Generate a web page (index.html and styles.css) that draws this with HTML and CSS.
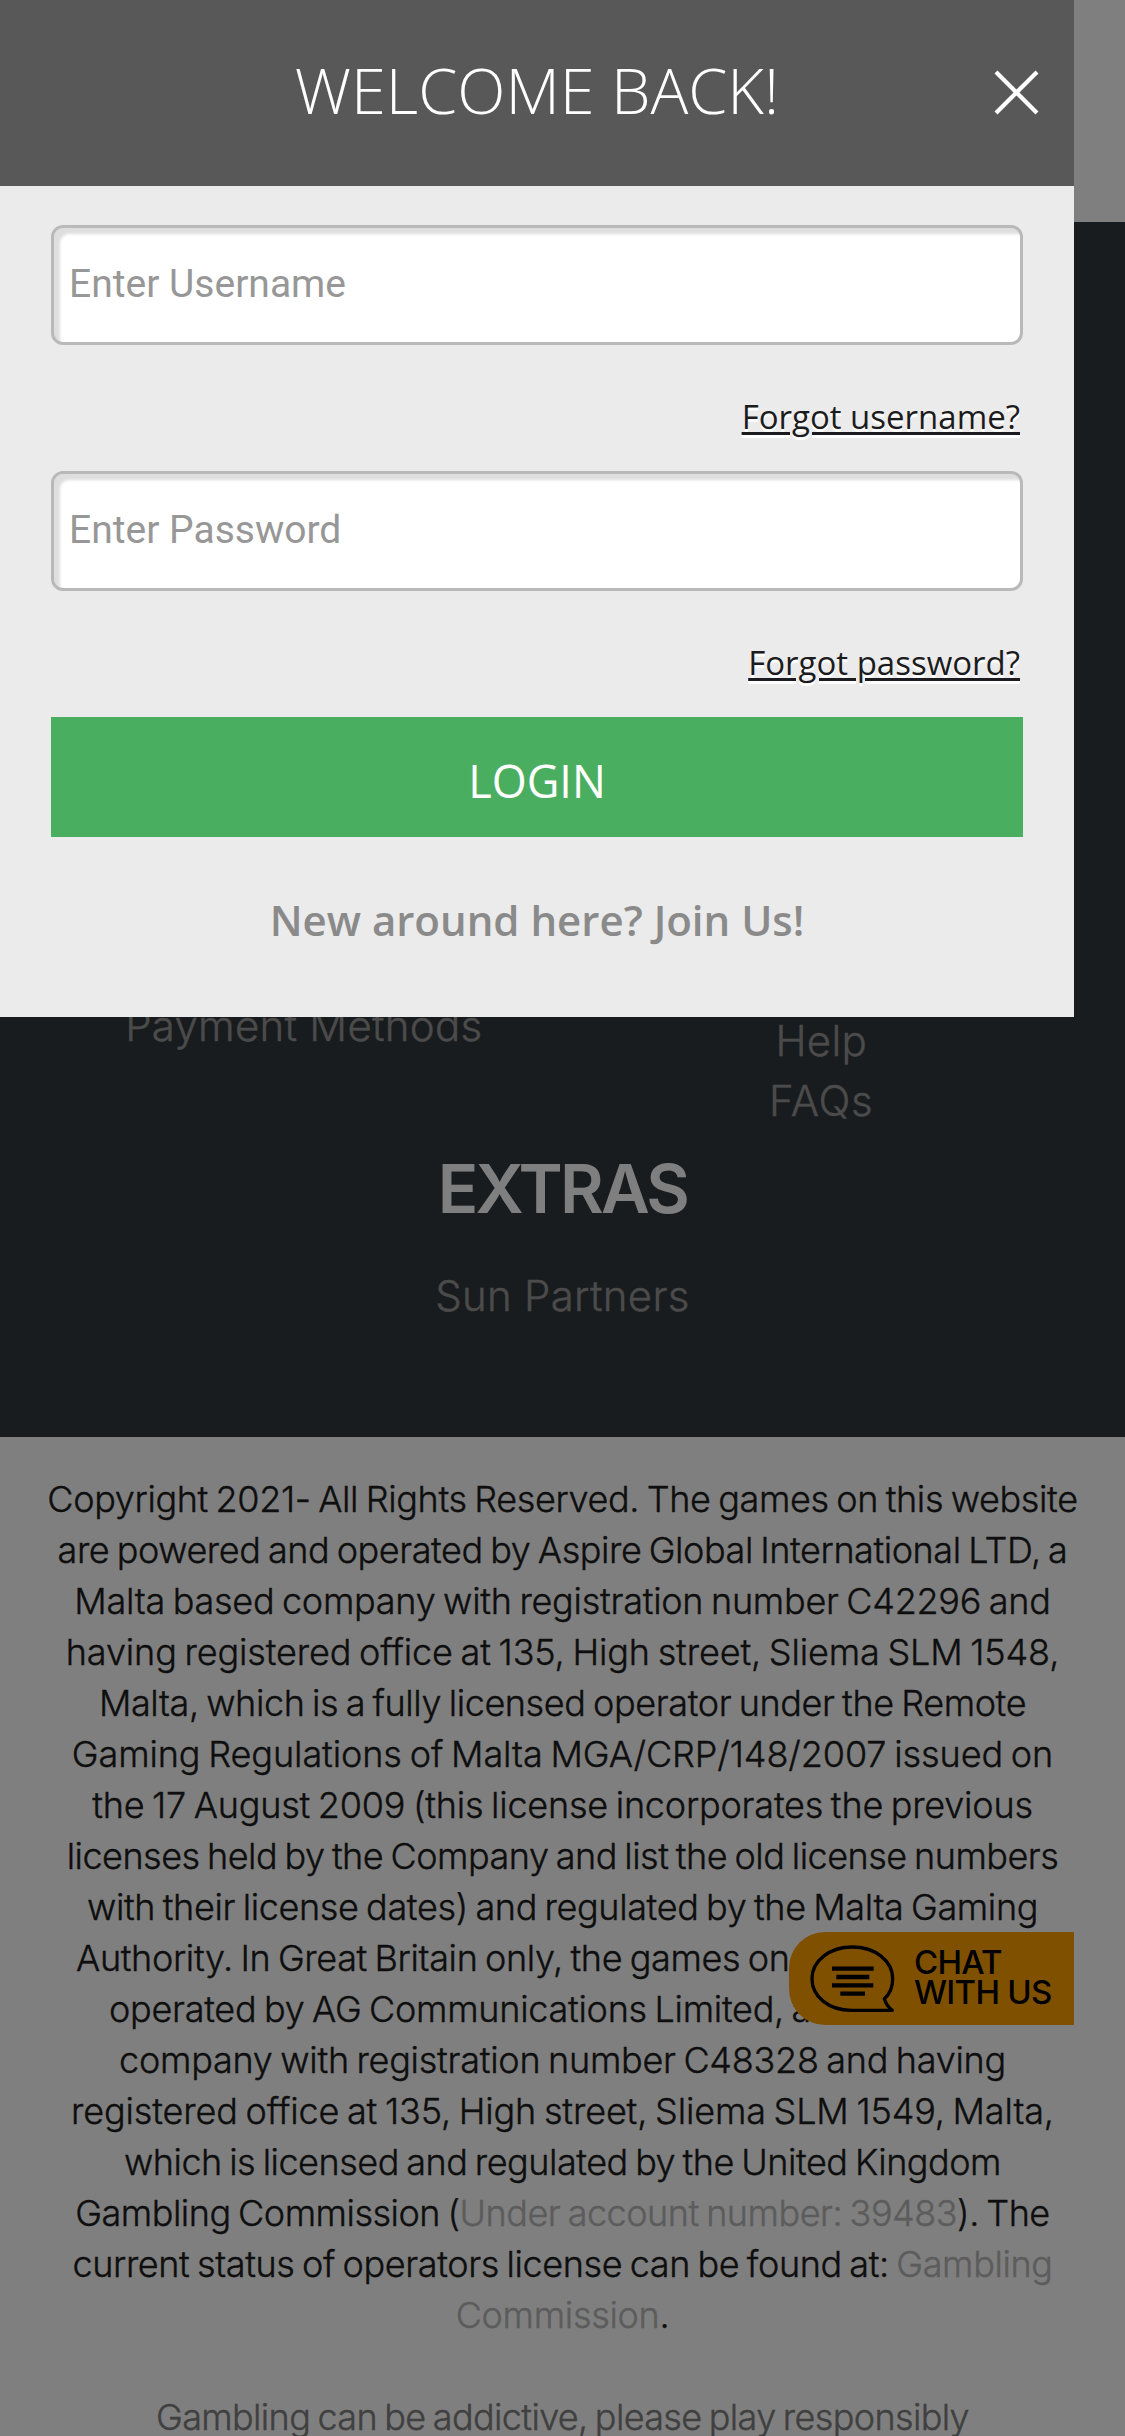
FILE: index.html
```
<!DOCTYPE html>
<html lang="en">
<head>
<meta charset="utf-8">
<title>Welcome back</title>
<link rel="stylesheet" href="styles.css">
</head>
<body>
<div class="page">
  <header class="topbar"></header>
  <nav class="sitemap">
    <div class="columns">
      <ul class="links"><li><a>Payment Methods</a></li></ul>
      <ul class="links links-help"><li><a>Help</a></li><li><a class="faqs">FAQs</a></li></ul>
    </div>
    <h2 class="heading">EXTRAS</h2>
    <ul class="links"><li><a>Sun Partners</a></li></ul>
  </nav>
  <footer class="legal">
    <p class="copy">
      <span>Copyright 2021- All Rights Reserved. The games on this website</span>
      <span>are powered and operated by Aspire Global International LTD, a</span>
      <span>Malta based company with registration number C42296 and</span>
      <span>having registered office at 135, High street, Sliema SLM 1548,</span>
      <span>Malta, which is a fully licensed operator under the Remote</span>
      <span>Gaming Regulations of Malta MGA/CRP/148/2007 issued on</span>
      <span>the 17 August 2009 (this license incorporates the previous</span>
      <span>licenses held by the Company and list the old license numbers</span>
      <span>with their license dates) and regulated by the Malta Gaming</span>
      <span>Authority. In Great Britain only, the games on</span>
      <span>operated by AG Communications Limited, a</span>
      <span>company with registration number C48328 and having</span>
      <span>registered office at 135, High street, Sliema SLM 1549, Malta,</span>
      <span>which is licensed and regulated by the United Kingdom</span>
      <span>Gambling Commission (<a>Under account number: 39483</a>). The</span>
      <span>current status of operators license can be found at: <a>Gambling</a></span>
      <span><a>Commission</a>.</span>
    </p>
    <p class="notice">Gambling can be addictive, please play responsibly</p>
  </footer>
  <a class="chat">
    <svg class="chat-icon" viewBox="176 134 261 210" fill="none" stroke="#000">
      <path stroke-width="10" stroke-linejoin="round" d="M426 333H304C234 333 185 291 185 238C185 184 238 143 306 143C374 143 427 184 427 238C427 262 418 284 402 298Q408 320 426 333Z"/>
      <path stroke-width="13" d="M245 208H370M258 233H357M245 258H369M270 283H344"/>
    </svg>
    <span class="chat-label"><span>CHAT</span><span>WITH US</span></span>
  </a>
</div>
<div class="overlay"></div>
<section class="modal">
  <header class="modal-head">
    <h1 class="title">WELCOME BACK!</h1>
    <button class="close" aria-label="Close">
      <svg viewBox="0 0 45 45" stroke="#fff" stroke-width="4.2"><path d="M2 2L43 43M43 2L2 43"/></svg>
    </button>
  </header>
  <form class="form">
    <input class="field" type="text" placeholder="Enter Username">
    <a class="forgot">Forgot username?</a>
    <input class="field" type="password" placeholder="Enter Password">
    <a class="forgot">Forgot password?</a>
    <button class="login" type="button">LOGIN</button>
    <a class="join">New around here? Join Us!</a>
  </form>
</section>
</body>
</html>
```
FILE: styles.css
```
* { box-sizing: border-box; }
body { margin: 0; background: #fff; }
h1, h2, p, ul { margin: 0; padding: 0; font-weight: inherit; }
ul { list-style: none; }

.page {
  position: relative;
  width: 1125px;
  height: 2436px;
  overflow: hidden;
  background: #fff;
  font-family: Inter, "Liberation Sans", sans-serif;
  font-weight: 300;
  text-align: center;
}
.topbar { height: 222px; }

.sitemap {
  height: 1215px;
  padding: 774px 45px 0;
  background: #32383c;
  color: #979797;
  font-size: 42px;
  line-height: 60px;
}
.columns { display: grid; grid-template-columns: 1fr 1fr; }
.links { letter-spacing: .25px; -webkit-text-stroke: .4px; }
.links-help { padding-top: 15px; }
.faqs { letter-spacing: .7px; }
.heading {
  margin: 18px 0 37px;
  color: #fff;
  font-size: 67px;
  font-weight: 600;
  line-height: 80px;
  letter-spacing: -2.7px;
}

.legal {
  padding-top: 37px;
  font-size: 36px;
  line-height: 51px;
  word-spacing: -2.2px;
  color: #1c1c1c;
  -webkit-text-stroke: .4px;
}
.copy span { display: block; white-space: nowrap; }
.copy a { color: #b8b8b8; }
.copy span:nth-child(1) { letter-spacing: -.36px; }
.copy span:nth-child(2) { letter-spacing: -.44px; }
.copy span:nth-child(3) { letter-spacing: -.26px; }
.copy span:nth-child(4) { letter-spacing: -.13px; }
.copy span:nth-child(5) { letter-spacing: -.4px; }
.copy span:nth-child(6) { letter-spacing: -.09px; }
.copy span:nth-child(7) { letter-spacing: -.21px; }
.copy span:nth-child(8) { letter-spacing: -.51px; }
.copy span:nth-child(9) { letter-spacing: -.36px; }
.copy span:nth-child(10) { padding-left: 76px; letter-spacing: -.36px; text-align: left; }
.copy span:nth-child(11) { padding-left: 109px; letter-spacing: -.28px; text-align: left; }
.copy span:nth-child(12) { letter-spacing: -.26px; }
.copy span:nth-child(13) { letter-spacing: -.14px; }
.copy span:nth-child(14) { letter-spacing: -.49px; }
.copy span:nth-child(15) { letter-spacing: -.49px; }
.copy span:nth-child(16) { letter-spacing: -.39px; }
.copy span:nth-child(17) { letter-spacing: -.3px; }
.notice { margin-top: 51px; letter-spacing: -.64px; color: #808080; }

.chat {
  position: absolute;
  top: 1932px;
  left: 789px;
  display: flex;
  align-items: center;
  gap: 18px;
  width: 285px;
  height: 93px;
  padding-left: 20px;
  border-radius: 36px 0 0 36px;
  background: #ffa000;
  color: #000;
}
.chat-icon { width: 87px; height: 70px; }
.chat-label {
  display: grid;
  padding-bottom: 3px;
  font-size: 33px;
  font-weight: 500;
  line-height: 30.5px;
  letter-spacing: -.75px;
  text-align: left;
}

.overlay { position: absolute; top: 0; left: 0; width: 1125px; height: 2436px; background: rgba(0, 0, 0, .5); }

.modal {
  position: absolute;
  top: 0;
  left: 0;
  width: 1074px;
  height: 1017px;
  background: #ebebeb;
  font-family: "Open Sans", "Liberation Sans", sans-serif;
}
.modal-head {
  display: grid;
  grid-template-columns: 80px 1fr 80px;
  height: 186px;
  background: #585858;
  color: #fff;
}
.title {
  grid-column: 2;
  font-size: 63px;
  font-weight: 300;
  line-height: 179px;
  text-align: center;
}
.close { display: block; padding: 0 35px 2px 0; border: 0; background: none; }
.close svg { display: block; width: 45px; height: 45px; }

.form { display: flex; flex-direction: column; padding: 39px 51px 0; }
.field {
  height: 120px;
  padding: 0 15px 3px;
  border: 3px solid #b9b9b9;
  border-radius: 12px;
  background: #fff;
  box-shadow: inset 6px 6px 3px #dedede;
  font: 39px Roboto, "Liberation Sans", sans-serif;
}
.field::placeholder { color: #979797; opacity: 1; }
.forgot {
  height: 126px;
  padding: 17px 3px 0 0;
  color: #1c1c20;
  font-size: 33px;
  line-height: 110px;
  text-align: right;
  text-decoration: underline;
  text-decoration-thickness: 3px;
  text-underline-offset: 3px;
  text-shadow: 0 3px 0 #fff;
}
.login {
  height: 120px;
  padding: 8px 0 0;
  border: 0;
  background: #4aae60;
  color: #fff;
  font: 45px/112px "Open Sans", "Liberation Sans", sans-serif;
}
.join { color: #8a8a8a; font-size: 42px; font-weight: 600; line-height: 165px; text-align: center; }
```
